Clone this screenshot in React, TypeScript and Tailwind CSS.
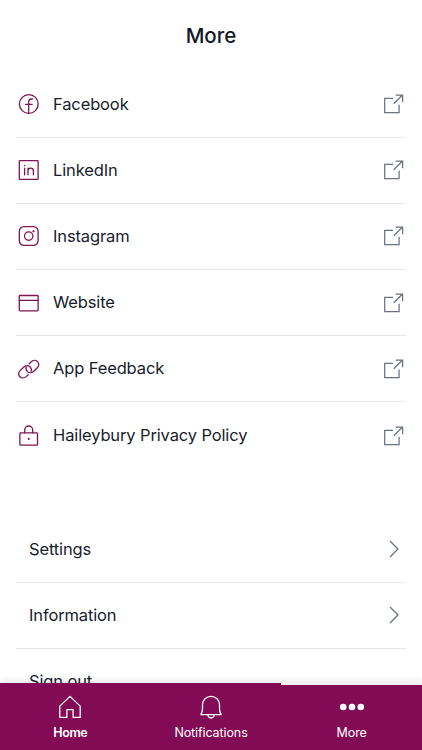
import type { ReactNode } from "react";

function Icon({ children }: { children: ReactNode }) {
  return (
    <svg
      viewBox="0 0 24 24"
      className="h-6 w-6 shrink-0 text-[#7f1353]"
      fill="none"
      stroke="currentColor"
      strokeWidth="1.3"
      strokeLinecap="round"
      strokeLinejoin="round"
    >
      {children}
    </svg>
  );
}

const chainLink =
  "M12.2 6.7l1.7-1.7c2-1.9 4.9-2.1 6.6-.4s1.700 4.400-.2 6.200l-3.500 3.400c-1.900 1.900-4.700 2-6.400.4c-1.300-1.300-1.700-2.900-1.200-4.600";

const links: { label: string; icon: ReactNode }[] = [
  {
    label: "Facebook",
    icon: (
      <>
        <circle cx="11.8" cy="12" r="9.4" />
        <path d="M11.7 21V10.200c0-2.200 1.100-3.200 2.700-3.200h1M8.600 12.300h6.600" />
      </>
    ),
  },
  {
    label: "LinkedIn",
    icon: (
      <>
        <rect x="2.300" y="2.600" width="18.800" height="18.800" rx="0.700" />
        <path d="M7.600 10.200v6.600M7.600 7.500v.2M11 10.200v6.600M11 12.700c0-1.600 1-2.600 2.700-2.600s2.700 1 2.700 2.600v4.100" />
      </>
    ),
  },
  {
    label: "Instagram",
    icon: (
      <>
        <rect x="2.300" y="2.600" width="18.800" height="18.800" rx="4.800" />
        <circle cx="11.700" cy="12.100" r="4.200" />
        <circle cx="16.500" cy="7.300" r="0.500" fill="currentColor" />
      </>
    ),
  },
  {
    label: "Website",
    icon: (
      <>
        <rect x="2.300" y="4.500" width="18.800" height="15.300" rx="0.700" />
        <path d="M2.300 9.400h18.800" />
      </>
    ),
  },
  {
    label: "App Feedback",
    icon: (
      <>
        <path d={chainLink} />
        <path d={chainLink} transform="rotate(180 11.7 12.2)" />
      </>
    ),
  },
  {
    label: "Haileybury Privacy Policy",
    icon: (
      <>
        <rect x="2.900" y="8.800" width="17.600" height="12.400" rx="0.700" />
        <path d="M7.700 8.800V6a4 4 0 0 1 8 0v2.800" />
        <circle cx="11.700" cy="14.900" r="0.400" fill="currentColor" />
      </>
    ),
  },
];

function ExternalIcon() {
  return (
    <svg viewBox="0 0 24 24" className="h-6 w-6 shrink-0 text-[#6b7280]" fill="none" stroke="currentColor" strokeWidth="1.250">
      <path d="M12 6.300H3.700v14.400h14.400v-8M12.700 11.800l8.600-8.500M14.700 3.200h6.900v7" />
    </svg>
  );
}

function Tab({ label, bold, children }: { label: string; bold?: boolean; children: ReactNode }) {
  return (
    <button className="flex flex-1 flex-col items-center pt-[10px] text-white">
      <svg viewBox="0 0 28 28" className="h-7 w-7" fill="none" stroke="currentColor" strokeWidth="1.300" strokeLinejoin="round">
        {children}
      </svg>
      <span
        className={`mt-[4px] text-[12.500px] leading-4 ${bold ? "font-semibold tracking-[-0.350px]" : "font-normal tracking-[-0.100px]"}`}
      >
        {label}
      </span>
    </button>
  );
}

export default function App() {
  return (
    <div className="relative h-[750px] w-full overflow-hidden bg-white font-['Inter',sans-serif] text-[#171d2d]">
      <header className="flex h-[71.500px] items-center justify-center pt-[1px] text-[20.500px] font-medium text-[#111827]">
        More
      </header>
      <main className="px-4">
        <ul>
          {links.map(({ label, icon }) => (
            <li key={label} className="flex h-[66.200px] items-center border-b border-[#e5e7eb] pl-[1px] pr-[1px] last:border-b-0">
              <Icon>{icon}</Icon>
              <span className="ml-3 flex-1 text-[16.500px] tracking-[-0.130px]">{label}</span>
              <ExternalIcon />
            </li>
          ))}
        </ul>
        <ul className="mt-[48px]">
          {["Settings", "Information", "Sign out"].map((label) => (
            <li key={label} className="flex h-[66.200px] items-center justify-between border-b border-[#e5e7eb] pl-[13px] pr-[6px]">
              <span className="text-[16.500px] tracking-[-0.130px]">{label}</span>
              {label !== "Sign out" && (
                <svg viewBox="0 0 12 20" className="h-5 w-3 text-[#6b7280]" fill="none" stroke="currentColor" strokeWidth="1.300">
                  <path d="M2 2l8 8-8 8" />
                </svg>
              )}
            </li>
          ))}
        </ul>
      </main>
      <nav className="absolute inset-x-0 bottom-0 h-[67px] bg-[#830b56] shadow-[0_-1px_8px_rgba(0,0,0,0.120)]">
        <div className="ml-auto h-[2px] w-[141px] bg-[#f3edf1]" />
        <div className="-mt-[2px] flex h-full">
          <Tab label="Home" bold>
            <path d="M3.800 13.100L14 3.400l10.200 9.700v11.300h-7.100v-7.700h-6.200v7.700H3.800z" />
          </Tab>
          <Tab label="Notifications">
            <path d="M4 21.200c1.200-1.600 1.500-3.300 1.500-5.600v-3.800a8.500 8.500 0 0 1 17 0v3.800c0 2.300.3 4 1.500 5.600v.5H4zM10.900 21.800c.2 2 1.500 3.200 3.100 3.200s2.900-1.200 3.100-3.200" />
          </Tab>
          <Tab label="More">
            <g fill="currentColor" stroke="none">
              <circle cx="5.200" cy="14" r="3.300" />
              <circle cx="14" cy="14" r="3.300" />
              <circle cx="22.800" cy="14" r="3.300" />
            </g>
          </Tab>
        </div>
      </nav>
    </div>
  );
}
